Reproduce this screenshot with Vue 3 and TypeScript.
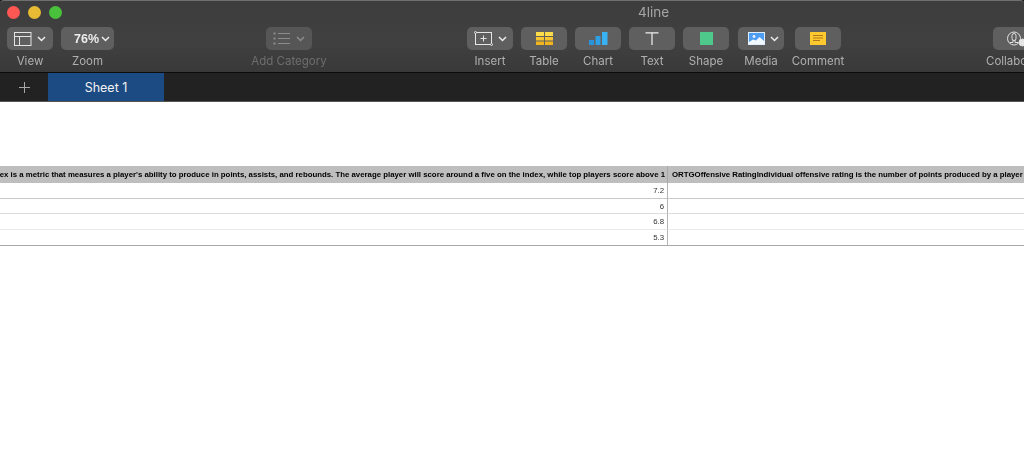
<script setup lang="ts">
const rows = ['7.2', '6', '6.8', '5.3']
</script>

<template>
  <div class="window">
    <header class="chrome">
      <div class="titlebar">
        <div class="lights">
          <span class="light red"></span>
          <span class="light yellow"></span>
          <span class="light green"></span>
        </div>
        <span class="doc-title">4line</span>
      </div>
      <div class="toolbar">
        <div class="tool view">
          <button class="btn">
            <svg width="18" height="14" viewBox="0 0 18 14" fill="none" stroke="#e4e4e4">
              <rect x="0.5" y="0.5" width="16.5" height="13" />
              <path d="M0.5 4.5H17M5.5 4.5V13.5" />
            </svg>
            <svg class="chev" width="9" height="6" viewBox="0 0 9 6"><path d="M1 1l3.5 3.5L8 1" /></svg>
          </button>
          <span class="label">View</span>
        </div>
        <div class="tool zoom">
          <button class="btn">
            <span class="zoom-val">76%</span>
            <svg class="chev" width="9" height="6" viewBox="0 0 9 6"><path d="M1 1l3.5 3.5L8 1" /></svg>
          </button>
          <span class="label">Zoom</span>
        </div>
        <div class="tool category disabled">
          <button class="btn">
            <svg width="18" height="13" viewBox="0 0 18 13" fill="none" stroke="#8c8c8c">
              <path d="M5 1.5H17M5 6.5H17M5 11.5H17" />
              <path d="M0.5 1.5H2.5M0.5 6.5H2.5M0.5 11.5H2.5" stroke-width="2" />
            </svg>
            <svg class="chev" width="9" height="6" viewBox="0 0 9 6"><path d="M1 1l3.5 3.5L8 1" /></svg>
          </button>
          <span class="label">Add Category</span>
        </div>
        <div class="tool insert">
          <button class="btn">
            <svg width="19" height="17" viewBox="0 0 19 17" fill="none" stroke="#e6e6e6">
              <rect x="1.5" y="2.5" width="16" height="12" />
              <path d="M9.5 5.5V11.5M6.5 8.5H12.5" />
              <circle cx="1.5" cy="2.5" r="1" fill="#5f5f5f" />
              <circle cx="17.5" cy="14.5" r="1" fill="#5f5f5f" />
            </svg>
            <svg class="chev" width="9" height="6" viewBox="0 0 9 6"><path d="M1 1l3.5 3.5L8 1" /></svg>
          </button>
          <span class="label">Insert</span>
        </div>
        <div class="tool">
          <button class="btn">
            <svg width="17" height="13" viewBox="0 0 17 13">
              <rect width="8" height="4" fill="#fddc4a" />
              <rect x="9" width="8" height="4" fill="#fddc4a" />
              <rect y="5" width="8" height="3.5" fill="#f7c52e" />
              <rect x="9" y="5" width="8" height="3.5" fill="#f7c52e" />
              <rect y="9.5" width="8" height="3.5" fill="#f2b51f" />
              <rect x="9" y="9.5" width="8" height="3.5" fill="#f2b51f" />
            </svg>
          </button>
          <span class="label">Table</span>
        </div>
        <div class="tool">
          <button class="btn">
            <svg width="19" height="13" viewBox="0 0 19 13">
              <rect y="8" width="5" height="5" fill="#2a92d8" />
              <rect x="6.5" y="4" width="5" height="9" fill="#2f9fe4" />
              <rect x="13" width="5.5" height="13" fill="#38b2f2" />
            </svg>
          </button>
          <span class="label">Chart</span>
        </div>
        <div class="tool">
          <button class="btn">
            <svg width="14" height="13" viewBox="0 0 14 13" fill="none" stroke="#f0f0f0" stroke-width="1.2">
              <path d="M0.5 0.8H13.5M7 0.8V13" />
            </svg>
          </button>
          <span class="label">Text</span>
        </div>
        <div class="tool">
          <button class="btn">
            <span class="shape"></span>
          </button>
          <span class="label">Shape</span>
        </div>
        <div class="tool media">
          <button class="btn">
            <svg width="17" height="13" viewBox="0 0 17 13">
              <rect width="17" height="13" fill="#dfeeff" />
              <rect x="1" y="1" width="15" height="11" fill="#4d9df2" />
              <circle cx="6" cy="4.5" r="1.4" fill="#e8f3ff" />
              <path d="M1 10l4-2.5 3 1L11.5 5 16 9v3H1z" fill="#f2f8ff" />
            </svg>
            <svg class="chev" width="9" height="6" viewBox="0 0 9 6"><path d="M1 1l3.5 3.5L8 1" /></svg>
          </button>
          <span class="label">Media</span>
        </div>
        <div class="tool comment">
          <button class="btn">
            <svg width="16" height="13" viewBox="0 0 16 13">
              <rect width="16" height="13" fill="#fdc92f" />
              <path d="M3 3.5H13M3 6H13M3 8.5H10" stroke="#a5701a" stroke-width="0.9" />
            </svg>
          </button>
          <span class="label">Comment</span>
        </div>
        <div class="tool collab">
          <button class="btn">
            <svg width="18" height="16" viewBox="0 0 18 16" fill="none" stroke="#e0e0e0">
              <circle cx="7" cy="7.5" r="6.5" />
              <path d="M5 4.5a2 2 0 0 1 4 0v3a2 2 0 0 1-4 0zM6 9v2.5H3M8 9v2.5h3" />
              <circle cx="15.5" cy="11.5" r="3.5" fill="#e6e6e6" />
            </svg>
          </button>
          <span class="label">Collabo</span>
        </div>
      </div>
    </header>

    <nav class="tabs">
      <span class="add-sheet">
        <svg width="13" height="13" viewBox="0 0 13 13" stroke="#a8a8a8"><path d="M6.5 1V12M1 6.5H12" /></svg>
      </span>
      <span class="tab">Sheet 1</span>
    </nav>

    <main class="canvas">
      <div class="sheet">
        <div class="cell head left">
          <span>ex is a metric that measures a player's ability to produce in points, assists, and rebounds. The average player will score around a five on the index, while top players score above 1</span>
        </div>
        <div class="cell head right">
          <span>ORTGOffensive RatingIndividual offensive rating is the number of points produced by a player</span>
        </div>
        <template v-for="(val, i) in rows" :key="val">
          <div class="cell num" :class="`row-${i}`"><span>{{ val }}</span></div>
          <div class="cell blank" :class="`row-${i}`"></div>
        </template>
      </div>
    </main>
  </div>
</template>

<style scoped>
.window {
  width: 1024px;
  height: 449px;
  overflow: hidden;
  display: flex;
  flex-direction: column;
  background: #1a1a1a;
  font-family: Inter, "Liberation Sans", Arial, sans-serif;
}

.chrome {
  height: 73px;
  flex: none;
  box-sizing: border-box;
  background: linear-gradient(180deg, #3d3d3d 0%, #404040 60%, #393939 100%);
  border-top: 1px solid #6f6f6f;
  border-bottom: 1px solid #0c0c0c;
  border-radius: 4px 4px 0 0;
}

.titlebar {
  height: 26px;
  display: flex;
  align-items: center;
  position: relative;
}

.lights {
  display: flex;
  gap: 8px;
  padding-left: 7px;
  margin-top: -3px;
}

.light {
  width: 13px;
  height: 13px;
  border-radius: 50%;
}

.red { background: #fc5753; }
.yellow { background: #e8bb34; }
.green { background: #49c13c; }

.doc-title {
  position: absolute;
  left: 638px;
  top: 3px;
  font-size: 13.5px;
  color: #a6a6a6;
  filter: blur(0.3px);
}

.toolbar {
  display: flex;
  align-items: flex-start;
  padding-left: 7px;
  gap: 8px;
}

.tool {
  width: 46px;
  display: flex;
  flex-direction: column;
  align-items: center;
  gap: 2.5px;
  flex: none;
}

.tool.zoom { width: 53px; }
.tool.category { margin-left: 144px; }
.tool.insert { margin-left: 147px; }
.tool.media { margin-left: 1px; }
.tool.comment { margin-left: 3px; }
.tool.collab { margin-left: 144px; }

.btn {
  width: 100%;
  height: 23px;
  padding: 0;
  display: flex;
  align-items: center;
  justify-content: center;
  gap: 5px;
  border: 0;
  border-radius: 5px;
  background: #5f5f5f;
  flex: none;
}

.chev {
  fill: none;
  stroke: #ececec;
  stroke-width: 1.5;
}

.zoom-val {
  font-size: 12.5px;
  font-weight: 600;
  color: #ececec;
  margin-left: 9px;
  filter: blur(0.2px);
}

.zoom .btn { gap: 2px; }

.media .btn { justify-content: flex-start; padding-left: 10px; box-sizing: border-box; }

.label {
  font-size: 11.5px;
  line-height: 16px;
  color: #b0b0b0;
  white-space: nowrap;
  filter: blur(0.3px);
}

.collab .label {
  align-self: flex-start;
  margin-left: -7px;
}

.collab .btn { justify-content: flex-start; padding-left: 14px; box-sizing: border-box; }

.disabled .btn { background: #565656; }
.disabled .chev { stroke: #8c8c8c; }
.disabled .label { color: #6e6e6e; }

.shape {
  width: 13px;
  height: 13px;
  background: #4fc98b;
}

.tabs {
  height: 29px;
  flex: none;
  box-sizing: border-box;
  display: flex;
  background: #222;
  border-bottom: 1px solid #555;
}

.add-sheet {
  width: 48px;
  display: flex;
  align-items: center;
  justify-content: center;
}

.tab {
  width: 116px;
  display: flex;
  align-items: center;
  justify-content: center;
  background: #1c4a82;
  color: #f2f2f2;
  font-size: 12.5px;
}

.canvas {
  flex: 1;
  padding-top: 64px;
  background: #fff;
}

.sheet {
  display: grid;
  grid-template-columns: 668px 1fr;
  grid-template-rows: 17px 16px 15px 16px 15px;
  border-bottom: 1px solid #a8a8a8;
}

.cell {
  box-sizing: border-box;
  overflow: hidden;
  white-space: nowrap;
  display: flex;
  align-items: center;
  font-family: "Liberation Sans", Arial, sans-serif;
  font-size: 7.82px;
  color: #333;
}

.cell span { filter: blur(0.3px); }

.head {
  background: #bdbebd;
  font-weight: 700;
  color: #000;
}

.head.left {
  justify-content: flex-end;
  padding-right: 2px;
  border-right: 1px solid #a8a8a8;
}

.head.right { padding-left: 4px; }

.num {
  justify-content: flex-end;
  padding-right: 3px;
  border-right: 1px solid #b4b4b4;
}

.row-0 { border-bottom: 1px solid #c9c9c9; }
.row-1 { border-bottom: 1px solid #dcdcdc; }
.row-2 { border-bottom: 1px solid #eaeaea; }
</style>

<style>
html, body { background: #fff; }
</style>
